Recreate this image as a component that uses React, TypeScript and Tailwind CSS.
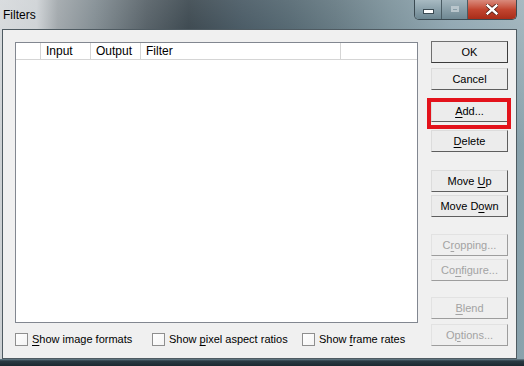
import React from "react";

const font = { fontFamily: '"Liberation Sans", Arial, sans-serif' };

function Btn({
  children,
  disabled,
  isDefault,
  className = "",
}: {
  children: React.ReactNode;
  disabled?: boolean;
  isDefault?: boolean;
  className?: string;
}) {
  return (
    <div
      className={
        "h-[22px] w-[77px] flex items-center justify-center text-[11px] leading-none border " +
        (disabled
          ? "text-[#a3a3a3] border-t-[#e2e2e2] border-l-[#e2e2e2] border-r-[#9d9d9d] border-b-[#9d9d9d] bg-[#efefef] "
          : isDefault
          ? "text-black border-[#6f6f6f] border-r-[#3c3c3c] border-b-[#3c3c3c] bg-[#ececec] "
          : "text-black border-t-[#dcdcdc] border-l-[#dcdcdc] border-r-[#5e5e5e] border-b-[#5e5e5e] bg-[#ececec] ") +
        className
      }
    >
      <span>{children}</span>
    </div>
  );
}

function U({ children }: { children: React.ReactNode }) {
  return <span className="underline underline-offset-[2px] decoration-1">{children}</span>;
}

function Check({ children, w }: { children: React.ReactNode; w?: string }) {
  return (
    <div className={"flex items-center " + (w ?? "")}>
      <div className="w-[13px] h-[13px] border border-[#8f8f8f] bg-gradient-to-br from-[#ffffff] to-[#f4f4f4] shrink-0" />
      <span className="ml-[4px] text-[11px] text-black leading-none whitespace-nowrap">{children}</span>
    </div>
  );
}

export default function App() {
  return (
    <div
      className="w-[524px] h-[366px] flex flex-col overflow-hidden relative"
      style={{
        ...font,
        background:
          "linear-gradient(to bottom, rgba(255,255,255,0.25), rgba(255,255,255,0) 40%), linear-gradient(to right, #cdd1d4 0%, #c3c8cc 7%, #8b9398 11%, #66737a 18%, #2f3c44 28%, #0f1e27 36%, #1e3340 46%, #2c4450 55%, #415a65 64%, #5c7782 74%, #7793a0 86%, #8aa3ad 100%)",
      }}
    >
      {/* Title bar */}
      <div className="h-[29px] flex items-start shrink-0">
        <div className="pl-[3px] pt-[9px] text-[12px] text-black leading-none">Filters</div>
        <div className="flex-1" />
        <div className="mr-[7px] flex h-[20px] rounded-b-[5px] border border-t-0 border-[#3b4a52] overflow-hidden shadow-[inset_0_0_0_1px_rgba(255,255,255,0.35)]">
          <div className="w-[27px] h-full flex items-center justify-center bg-gradient-to-b from-[#a8bac2] to-[#6d8792] border-r border-[#4a5c64]">
            <div className="w-[9px] h-[3px] bg-white mt-[4px] border border-[#3a4a52] box-content" />
          </div>
          <div className="w-[26px] h-full flex items-center justify-center bg-gradient-to-b from-[#a3b5bd] to-[#6f8893] border-r border-[#4a5c64]">
            <div className="w-[8px] h-[6px] border-[2px] border-[#b9c6cc] border-t-[3px] mt-[-2px]" />
          </div>
          <div className="w-[48px] h-full flex items-center justify-center bg-gradient-to-b from-[#d98a7c] via-[#c24530] to-[#a82c18]">
            <svg width="12" height="11" viewBox="0 0 12 11" className="mt-[-1px]">
              <path d="M1.5 1.5 L10.5 9.5 M10.5 1.5 L1.5 9.5" stroke="#4a1a10" strokeWidth="4" strokeLinecap="square" />
              <path d="M1.5 1.5 L10.5 9.5 M10.5 1.5 L1.5 9.5" stroke="#ffffff" strokeWidth="2.4" strokeLinecap="square" />
            </svg>
          </div>
        </div>
      </div>

      {/* Client area */}
      <div className="ml-[2px] w-[515px] h-[330px] border border-[#4f5b62] bg-[#f0f0f0] shrink-0">
        <div className="flex pl-[12px] pt-[11px]">
          {/* Left column */}
          <div className="flex flex-col w-[403px]">
            <div className="mt-[1px] w-[403px] h-[281px] border border-[#828790] bg-white flex flex-col">
              <div className="h-[17px] flex border-b border-[#d5d5d5] text-[12px] text-black leading-none">
                <div className="w-[25px] border-r border-[#d5d5d5]" />
                <div className="w-[50px] border-r border-[#d5d5d5] pl-[5px] flex items-center">Input</div>
                <div className="w-[50px] border-r border-[#d5d5d5] pl-[5px] flex items-center">Output</div>
                <div className="w-[200px] border-r border-[#d5d5d5] pl-[5px] flex items-center">Filter</div>
                <div className="flex-1" />
              </div>
            </div>
            <div className="mt-[10px] flex">
              <Check w="w-[137px]">
                <U>S</U>how image formats
              </Check>
              <Check w="w-[150px]">
                Show <U>p</U>ixel aspect ratios
              </Check>
              <Check>
                Show <U>f</U>rame rates
              </Check>
            </div>
          </div>

          {/* Button column */}
          <div className="ml-[13px] flex flex-col">
            <Btn isDefault>OK</Btn>
            <Btn className="mt-[5px]">Cancel</Btn>
            <div className="relative mt-[10px]">
              <Btn>
                <U>A</U>dd...
              </Btn>
              <div className="absolute left-[-4px] top-[-2px] right-[-3px] bottom-[-7px] border-[4px] border-[#e3121b]" />
            </div>
            <Btn className="mt-[8px]">
              <U>D</U>elete
            </Btn>
            <Btn className="mt-[18px]">
              Move <U>U</U>p
            </Btn>
            <Btn className="mt-[3px]">
              Move D<U>o</U>wn
            </Btn>
            <Btn disabled className="mt-[17px]">
              C<U>r</U>opping...
            </Btn>
            <Btn disabled className="mt-[3px]">
              Co<U>n</U>figure...
            </Btn>
            <Btn disabled className="mt-[16px]">
              <U>B</U>lend
            </Btn>
            <Btn disabled className="mt-[5px]">
              O<U>p</U>tions...
            </Btn>
          </div>
        </div>
      </div>
      <div
        className="flex-1"
        style={{
          background:
            "linear-gradient(to bottom, #6d8590 0px, #2a3a43 2px, #1b2830 100%), linear-gradient(to right, #27343c, #1a2830)",
        }}
      />
    </div>
  );
}
